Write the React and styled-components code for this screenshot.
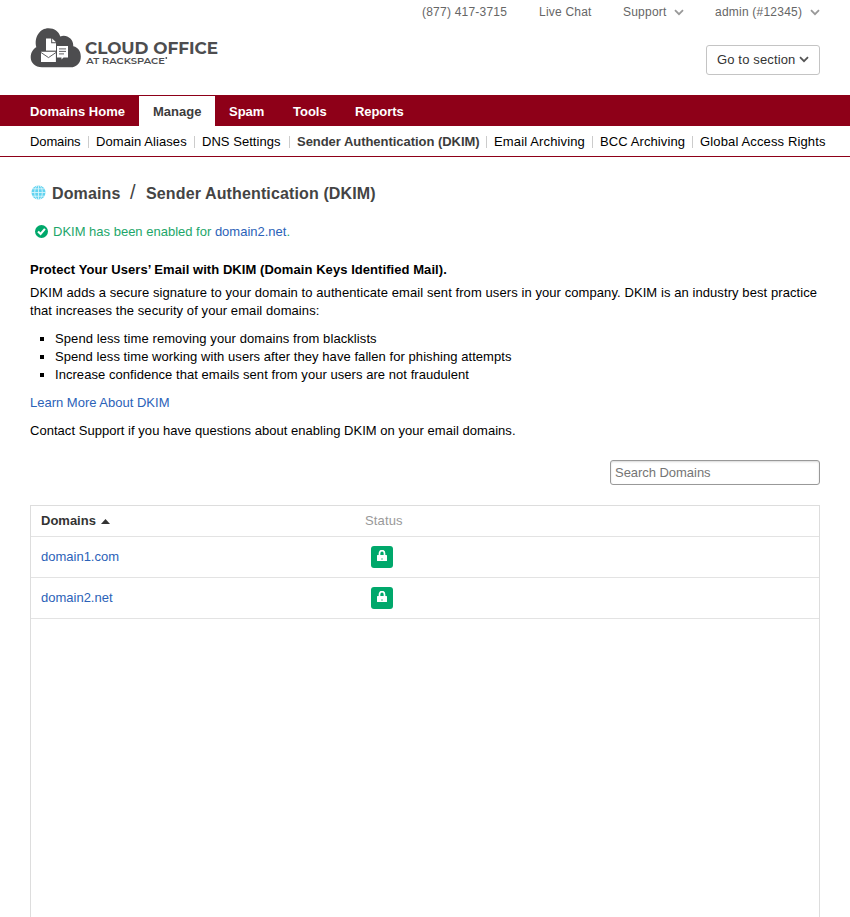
import React from "react";
import styled, { createGlobalStyle } from "styled-components";

const Global = createGlobalStyle`
  *, *::before, *::after { box-sizing: border-box; }
  html, body { margin: 0; padding: 0; background: #fff; height: 917px; overflow: hidden; }
  body { font: 13px/18px "Liberation Sans", Arial, sans-serif; color: #000; }
  a { color: inherit; text-decoration: none; }
`;

const Page = styled.div`
  width: 850px;
  height: 917px;
  overflow: hidden;
  display: flex;
  flex-direction: column;
`;

const Header = styled.header`
  height: 95px;
  flex: none;
  padding: 0 30px;
`;

const Utility = styled.div`
  height: 24px;
  display: flex;
  justify-content: flex-end;
  gap: 31px;
  font-size: 12px;
  line-height: 24px;
  color: #666;
`;

const UtilityItem = styled.a`
  display: flex;
  align-items: center;
  white-space: nowrap;
  flex: none;
  width: ${(p) => p.$w}px;
  letter-spacing: 0.22px;
  justify-content: space-between;
`;

const Brand = styled.div`
  display: flex;
  justify-content: space-between;
  padding-top: 3px;
`;

const SectionButton = styled.button`
  margin-top: 18px;
  width: 114px;
  height: 30px;
  border: 1px solid #c4c4c4;
  border-radius: 3px;
  background: #fff;
  padding: 0 10px;
  display: flex;
  align-items: center;
  justify-content: space-between;
  font: 13px/18px "Liberation Sans", Arial, sans-serif;
  letter-spacing: 0.14px;
  color: #333;
  white-space: nowrap;
  svg { margin-top: -2px; }
`;

const Tabs = styled.nav`
  height: 31px;
  flex: none;
  background: #8e0018;
  padding: 1px 16px 0;
  display: flex;
`;

const Tab = styled.a`
  width: ${(p) => p.$w}px;
  flex: none;
  padding: 1px 0 0 14px;
  line-height: 30px;
  height: 30px;
  font-weight: bold;
  white-space: nowrap;
  letter-spacing: ${(p) => p.$ls || 0}px;
  && { color: ${(p) => (p.$active ? "#3c3c3c" : "#fff")}; }
  background: ${(p) => (p.$active ? "#fff" : "transparent")};
`;

const SubNav = styled.nav`
  height: 31px;
  flex: none;
  border-bottom: 1px solid #8e0018;
  padding: 2px 0 0 30px;
  display: flex;
  align-items: center;
`;

const SubItem = styled.a`
  width: ${(p) => p.$w}px;
  flex: none;
  display: flex;
  align-items: center;
  white-space: nowrap;
  letter-spacing: ${(p) => p.$ls || 0}px;
  && { color: ${(p) => (p.$active ? "#3c3c3c" : "#000")}; }
  font-weight: ${(p) => (p.$active ? "bold" : "normal")};
  &:not(:last-child)::after {
    content: "";
    width: 1px;
    height: 12px;
    margin: 0 7px 0 auto;
    background: #ccc;
  }
`;

const Main = styled.main`
  flex: 1;
  min-height: 0;
  padding: 0 30px;
  display: flex;
  flex-direction: column;
`;

const Crumbs = styled.h1`
  margin: 26px 0 0;
  padding-left: 1px;
  height: 22px;
  display: flex;
  align-items: center;
  font-size: 16px;
  line-height: 22px;
  color: #444;
  white-space: nowrap;
  svg { margin-top: -3px; }
`;

const CrumbText = styled.span`
  margin-left: ${(p) => p.$gap}px;
  width: ${(p) => (p.$w ? `${p.$w}px` : "auto")};
  letter-spacing: 0.13px;
`;

const Slash = styled.span`
  font-weight: normal;
  font-size: 20px;
  margin: -4px 0 0 9px;
  width: 6px;
`;

const Notice = styled.p`
  margin: 18px 0 0;
  padding-left: 5px;
  display: flex;
  align-items: center;
  gap: 5px;
  color: #1da66a;
  svg { margin-top: -1px; }
`;

const Link = styled.a`
  && { color: #2b62b8; }
`;

const SubHeading = styled.h2`
  font-size: 13px;
  line-height: 18px;
  margin: 20px 0 5px;
  letter-spacing: 0.062px;
`;

const Line = styled.span`
  display: block;
  white-space: nowrap;
  letter-spacing: ${(p) => p.$ls || 0}px;
`;

const Paragraph = styled.p`
  margin: 0 0 10px;
`;

const Bullets = styled.ul`
  list-style: none;
  margin: 0 0 10px;
  padding: 0;
`;

const Bullet = styled.li`
  display: flex;
  align-items: center;
  letter-spacing: ${(p) => p.$ls || 0}px;
  &::before {
    content: "";
    width: 4px;
    height: 4px;
    margin: 0 11px 0 10px;
    background: #000;
  }
`;

const Search = styled.input`
  align-self: flex-end;
  flex: none;
  margin: 10px 0 20px;
  width: 210px;
  height: 25px;
  border: 1px solid #999;
  border-radius: 3px;
  box-shadow: inset 0 1px 2px rgba(0, 0, 0, 0.15);
  padding: 0 4px;
  font: 13px "Liberation Sans", Arial, sans-serif;
  letter-spacing: -0.04px;
  outline: 0;
  &::placeholder { color: #757575; opacity: 1; }
`;

const Table = styled.section`
  flex: 1;
  border: 1px solid #ddd;
  border-bottom: 0;
`;

const Row = styled.div`
  height: ${(p) => (p.$head ? 31 : 41)}px;
  border-bottom: 1px solid #e3e3e3;
  display: grid;
  grid-template-columns: 324px 1fr;
  padding-left: 10px;
  align-items: center;
`;

const HeadCell = styled.div`
  display: flex;
  align-items: center;
  gap: 5px;
  color: ${(p) => (p.$sorted ? "#333" : "#999")};
  font-weight: ${(p) => (p.$sorted ? "bold" : "normal")};
  letter-spacing: ${(p) => (p.$sorted ? 0 : 0.15)}px;
  svg { margin-top: 1px; }
`;

const Badge = styled.span`
  width: 22px;
  height: 22px;
  margin-left: 6px;
  border-radius: 3px;
  background: #00a86b;
  display: flex;
  justify-content: center;
  padding-top: 4px;
`;

const Chevron = ({ color = "#999" }) => (
  <svg width="10" height="7" viewBox="0 0 10 7" fill="none" stroke={color} strokeWidth="1.8">
    <path d="M1 1.2 5 5.2 9 1.2" />
  </svg>
);

const Logo = () => (
  <svg width="190" height="44" viewBox="30 27 190 44">
    <path
      fill="#4d4d4f"
      d="M42 67.3C35 67.3 30.7 62.8 30.7 57.3C30.7 52.3 33.5 48.5 36.3 47.2C33.8 37 40 28.3 48.5 28.3C54.5 28.3 58.7 31.5 60.3 36.6C66 34 73.5 38.5 73.3 46.2C78.5 47.5 80.8 51.5 80.8 56.7C80.8 62.8 76.8 67.3 70.5 67.3Z"
    />
    <path fill="#fff" d="M46 38.4H51.2V43.2H56V51H46Z" />
    <path fill="#fff" d="M52.2 38.4 56 42.2H52.2Z" />
    <path fill="#fff" d="M41 51.5H56V62H41Z" />
    <path fill="none" stroke="#4d4d4f" strokeWidth="0.9" d="M41 52.5 48.5 57.6 56 52.5M41 51.1H56.4V62" />
    <path fill="#fff" d="M57 46H68V57.6H63.5L61.5 59.5V57.6H57Z" />
    <path stroke="#4d4d4f" strokeWidth="0.9" d="M59 48.9H66M59 51.4H66M59 53.9H64" />
    <g fill="#4d4d4f" fontFamily="Montserrat, Lato, sans-serif">
      <text x="85" y="54" fontSize="17" fontWeight="700" textLength="133" lengthAdjust="spacingAndGlyphs">CLOUD OFFICE</text>
      <text x="86.3" y="63.9" fontSize="9.4" fontWeight="600" textLength="78.5" lengthAdjust="spacingAndGlyphs">AT RACKSPACE</text>
    </g>
    <circle cx="166.3" cy="58" r="0.9" fill="#4d4d4f" />
  </svg>
);

const Globe = () => (
  <svg width="15" height="15" viewBox="0 0 15 15">
    <circle cx="7.5" cy="7.5" r="7" fill="#62d3f0" />
    <g fill="none" stroke="#d5f4fb" strokeWidth="0.9">
      <path d="M0 7.5H15M1.5 3.8H13.5M1.5 11.2H13.5M7.5 0V15" />
      <ellipse cx="7.5" cy="7.5" rx="3.8" ry="7.2" />
    </g>
  </svg>
);

const CheckIcon = () => (
  <svg width="13" height="13" viewBox="0 0 13 13">
    <circle cx="6.5" cy="6.5" r="6.5" fill="#00a86b" />
    <path d="M3 6.4 5.6 9 9.9 3.9" fill="none" stroke="#fff" strokeWidth="2.1" />
  </svg>
);

const LockIcon = () => (
  <svg width="10" height="12" viewBox="0 0 10 12">
    <path d="M2.5 6V3.6C2.5 -0.4 7.5 -0.4 7.5 3.6V6" fill="none" stroke="#fff" strokeWidth="1.7" />
    <rect y="5" width="10" height="6" rx="0.5" fill="#fff" />
    <rect x="4" y="8" width="2" height="2" fill="#a6dfc9" />
  </svg>
);

const SortIcon = () => (
  <svg width="9" height="5" viewBox="0 0 9 5">
    <path d="M0 5 4.5 0 9 5Z" fill="#333" />
  </svg>
);

const tabs = [
  { label: "Domains Home", w: 123, ls: 0.04 },
  { label: "Manage", w: 76, active: true },
  { label: "Spam", w: 64 },
  { label: "Tools", w: 62 },
  { label: "Reports", w: 80, ls: -0.08 },
];

const links = [
  { label: "Domains", w: 66, ls: -0.12 },
  { label: "Domain Aliases", w: 106, ls: 0.08 },
  { label: "DNS Settings", w: 95, ls: 0.04 },
  { label: "Sender Authentication (DKIM)", w: 197, ls: -0.04, active: true },
  { label: "Email Archiving", w: 106, ls: 0.14 },
  { label: "BCC Archiving", w: 100, ls: 0.1 },
  { label: "Global Access Rights", w: 130, ls: 0.14 },
];

const bullets = [
  { text: "Spend less time removing your domains from blacklists", ls: 0.085 },
  { text: "Spend less time working with users after they have fallen for phishing attempts", ls: 0.062 },
  { text: "Increase confidence that emails sent from your users are not fraudulent", ls: 0.05 },
];

const domains = [
  { name: "domain1.com" },
  { name: "domain2.net" },
];

export default function App() {
  return (
    <Page>
      <Global />
      <Header>
        <Utility>
          <UtilityItem $w={86}>(877) 417-3715</UtilityItem>
          <UtilityItem $w={53}>Live Chat</UtilityItem>
          <UtilityItem $w={61}>Support <Chevron /></UtilityItem>
          <UtilityItem $w={105}>admin (#12345) <Chevron /></UtilityItem>
        </Utility>
        <Brand>
          <Logo />
          <SectionButton>Go to section <Chevron color="#555" /></SectionButton>
        </Brand>
      </Header>
      <Tabs>
        {tabs.map((t) => <Tab key={t.label} $w={t.w} $ls={t.ls} $active={t.active}>{t.label}</Tab>)}
      </Tabs>
      <SubNav>
        {links.map((l) => <SubItem key={l.label} $w={l.w} $ls={l.ls} $active={l.active}>{l.label}</SubItem>)}
      </SubNav>
      <Main>
        <Crumbs>
          <Globe />
          <CrumbText $gap={6} $w={69}>Domains</CrumbText>
          <Slash>/</Slash>
          <CrumbText $gap={10}>Sender Authentication (DKIM)</CrumbText>
        </Crumbs>
        <Notice><CheckIcon /><span>DKIM has been enabled for <Link>domain2.net</Link>.</span></Notice>
        <SubHeading>Protect Your Users’ Email with DKIM (Domain Keys Identified Mail).</SubHeading>
        <Paragraph>
          <Line $ls={0.08}>DKIM adds a secure signature to your domain to authenticate email sent from users in your company. DKIM is an industry best practice</Line>
          <Line $ls={0.08}>that increases the security of your email domains:</Line>
        </Paragraph>
        <Bullets>
          {bullets.map((b) => <Bullet key={b.text} $ls={b.ls}>{b.text}</Bullet>)}
        </Bullets>
        <Paragraph><Link>Learn More About DKIM</Link></Paragraph>
        <Paragraph>
          <Line $ls={0.035}>Contact Support if you have questions about enabling DKIM on your email domains.</Line>
        </Paragraph>
        <Search placeholder="Search Domains" />
        <Table>
          <Row $head>
            <HeadCell $sorted>Domains <SortIcon /></HeadCell>
            <HeadCell>Status</HeadCell>
          </Row>
          {domains.map((d) => (
            <Row key={d.name}><Link>{d.name}</Link><Badge><LockIcon /></Badge></Row>
          ))}
        </Table>
      </Main>
    </Page>
  );
}
